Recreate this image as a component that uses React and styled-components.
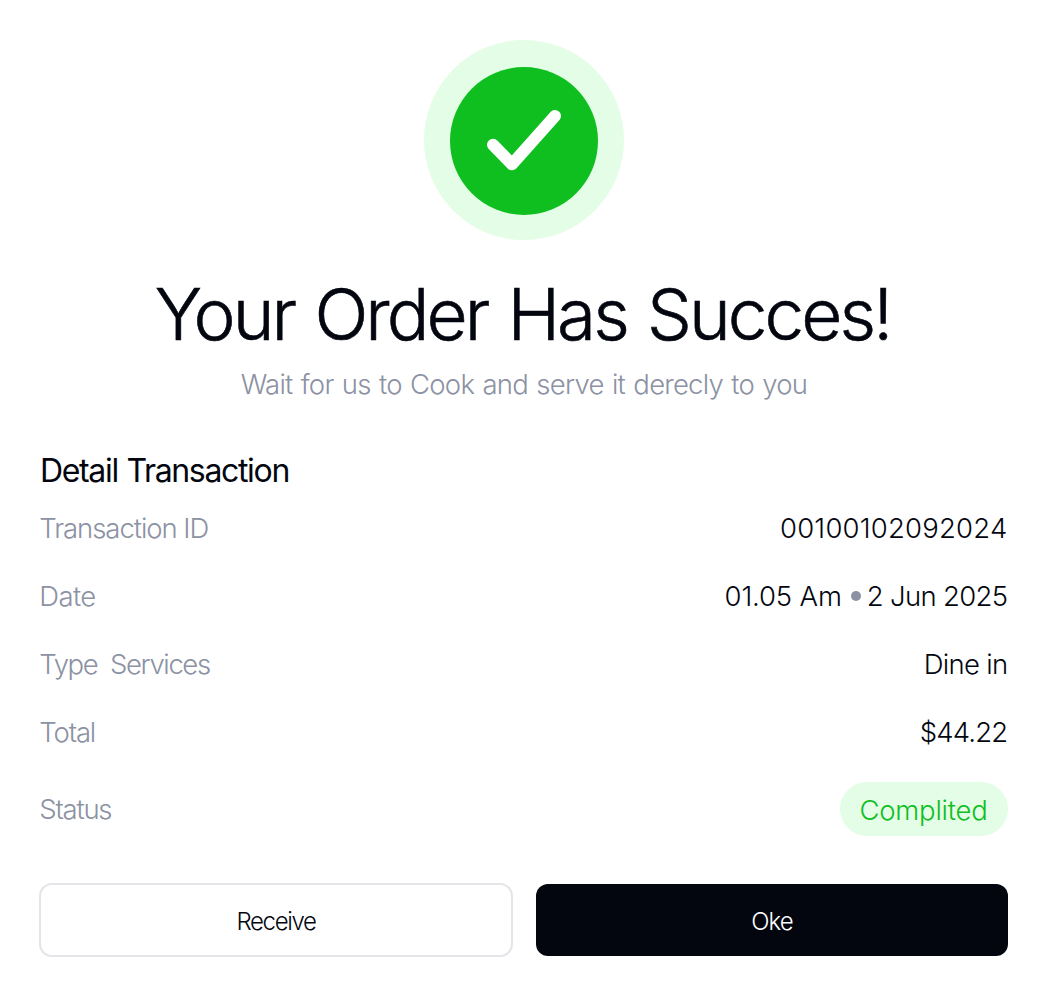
import React from 'react';
import styled, { createGlobalStyle } from 'styled-components';

const INK = '#03060f';
const MUTED = '#8c92a3';
const GREEN = '#0fbf1f';
const MINT = '#e4fde7';

const GlobalStyle = createGlobalStyle`
  *, *::before, *::after { box-sizing: border-box; }
  body {
    margin: 0;
    background: #fff;
    color: ${INK};
    font-family: Inter, "Liberation Sans", sans-serif;
    font-weight: 300;
  }
`;

const Card = styled.main`
  display: flex;
  flex-direction: column;
  width: 1048px;
  height: 996px;
  padding: 40px;
`;

const Hero = styled.header`
  display: flex;
  flex-direction: column;
  align-items: center;
  white-space: nowrap;
`;

const SuccessIcon = styled.svg`
  display: block;
  width: 200px;
  height: 200px;
`;

const Title = styled.h1`
  margin: 26px 3px 0 0;
  font-size: 71px;
  font-weight: 300;
  line-height: 97px;
  letter-spacing: -2.95px;
  word-spacing: 3.2px;
  -webkit-text-stroke: 0.6px ${INK};
`;

const Subtitle = styled.p`
  margin: 2px 0 0;
  color: ${MUTED};
  font-size: 27.5px;
  line-height: 38px;
  letter-spacing: -0.78px;
  word-spacing: 1.4px;
`;

const SectionTitle = styled.h2`
  margin: 46px 0 17px;
  font-size: 32px;
  font-weight: 400;
  line-height: 43px;
  letter-spacing: -1.34px;
  word-spacing: 1px;
`;

const Details = styled.dl`
  display: flex;
  flex-direction: column;
  gap: 30px;
  margin: 0;
`;

const Row = styled.div`
  display: flex;
  align-items: center;
  justify-content: space-between;
  font-size: 27.5px;
  line-height: 38px;
  white-space: pre;
`;

const StatusRow = styled(Row)`
  margin-top: 1px;
`;

const Label = styled.dt`
  margin-left: -0.7px;
  color: ${MUTED};
  letter-spacing: ${p => p.$tracking}px;
`;

const Value = styled.dd`
  display: flex;
  align-items: center;
  margin: 0 0.6px 0 0;
  letter-spacing: ${p => p.$tracking || 0}px;
`;

const DateText = styled.span`
  letter-spacing: -0.68px;
`;

const Dot = styled.span`
  width: 10px;
  height: 10px;
  margin: 0 6px 0 9px;
  border-radius: 50%;
  background: ${MUTED};
`;

const Badge = styled.dd`
  display: flex;
  align-items: center;
  justify-content: center;
  width: 168px;
  height: 54px;
  margin: 0;
  padding: 2px 1px 0 0;
  border-radius: 27px;
  background: ${MINT};
  color: ${GREEN};
  letter-spacing: -0.25px;
`;

const Actions = styled.footer`
  display: grid;
  grid-template-columns: 1fr 1fr;
  gap: 24px;
  height: 72px;
  margin-top: 48px;
`;

const Button = styled.button`
  display: flex;
  align-items: center;
  justify-content: center;
  margin: ${p => (p.$outlined ? '-1px' : '0')};
  padding: 4px 0 0;
  border: ${p => (p.$outlined ? '2px solid #e4e4e9' : '0')};
  border-radius: ${p => (p.$outlined ? '13px' : '12px')};
  background: ${p => (p.$outlined ? '#fff' : INK)};
  color: ${p => (p.$outlined ? INK : '#fff')};
  font: 300 24px/32px Inter, "Liberation Sans", sans-serif;
  letter-spacing: ${p => p.$tracking}px;
`;

const rows = [
  { label: 'Transaction ID', labelTracking: -1.05, value: '00100102092024', tracking: 0.2 },
  { label: 'Date', labelTracking: -0.6, value: '01.05 Am', date: '2 Jun 2025', tracking: -0.15 },
  { label: 'Type  Services', labelTracking: -1.39, value: 'Dine in', tracking: -0.7 },
  { label: 'Total', labelTracking: -1.15, value: '$44.22', tracking: -0.8 },
];

export default function App() {
  return (
    <>
      <GlobalStyle />
      <Card>
        <Hero>
          <SuccessIcon viewBox="0 0 200 200" fill="none" aria-hidden="true">
            <circle cx="100" cy="100" r="100" fill={MINT} />
            <circle cx="100" cy="101" r="74" fill={GREEN} />
            <path
              d="M69 104.7L88 124.2L131 75.9"
              stroke="#fff"
              strokeWidth="12"
              strokeLinecap="round"
              strokeLinejoin="round"
            />
          </SuccessIcon>
          <Title>Your Order Has Succes!</Title>
          <Subtitle>Wait for us to Cook and serve it derecly to you</Subtitle>
        </Hero>
        <SectionTitle>Detail Transaction</SectionTitle>
        <Details>
          {rows.map(row => (
            <Row key={row.label}>
              <Label $tracking={row.labelTracking}>{row.label}</Label>
              <Value $tracking={row.tracking}>
                {row.value}
                {row.date && (
                  <>
                    <Dot />
                    <DateText>{row.date}</DateText>
                  </>
                )}
              </Value>
            </Row>
          ))}
          <StatusRow>
            <Label $tracking={-1.25}>Status</Label>
            <Badge>Complited</Badge>
          </StatusRow>
        </Details>
        <Actions>
          <Button type="button" $outlined $tracking={-1.38}>Receive</Button>
          <Button type="button" $tracking={-0.9}>Oke</Button>
        </Actions>
      </Card>
    </>
  );
}
